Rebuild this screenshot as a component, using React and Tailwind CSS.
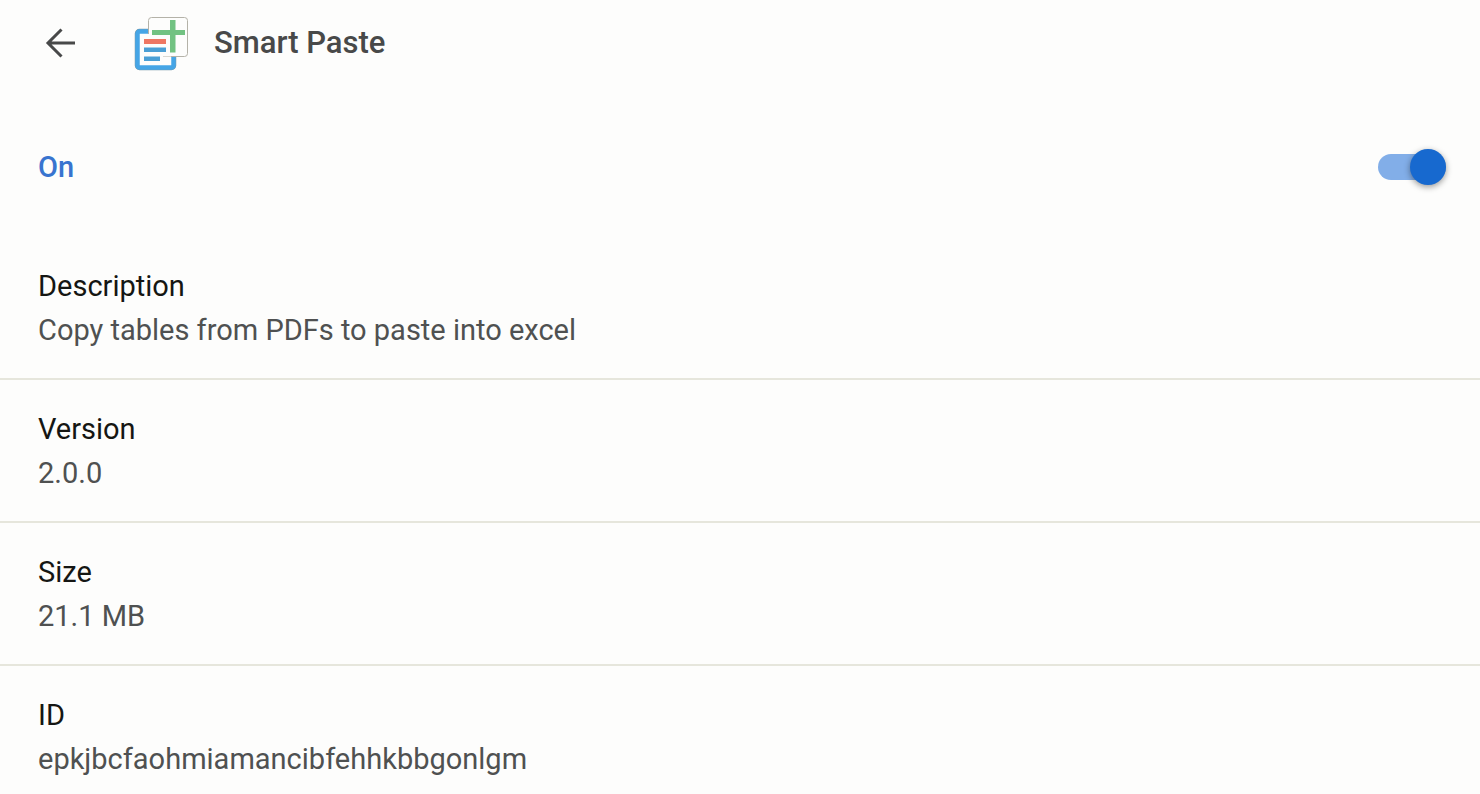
import { useState } from 'react';

const details = [
  { label: 'Description', value: 'Copy tables from PDFs to paste into excel' },
  { label: 'Version', value: '2.0.0' },
  { label: 'Size', value: '21.1 MB' },
  { label: 'ID', value: 'epkjbcfaohmiamancibfehhkbbgonlgm' },
];

function BackArrow() {
  return (
    <svg viewBox="0 0 32 32" className="size-8" fill="none" stroke="currentColor" strokeWidth="3" aria-hidden="true">
      <path d="M31 16H4M17.500 2.500L4 16l13.500 13.500" />
    </svg>
  );
}

function ExtensionIcon() {
  return (
    <svg viewBox="0 0 56 56" className="size-14" aria-hidden="true">
      <rect x="3.500" y="16.500" width="36" height="36" rx="2" fill="#fdfdfc" stroke="#7b9aa8" strokeWidth="5.500" />
      <rect x="3.500" y="16.500" width="36" height="36" rx="2" fill="#fdfdfc" stroke="#45a5e6" strokeWidth="4.500" />
      <rect x="14.500" y="2.500" width="39" height="39" rx="3" fill="#fdfdfc" stroke="#b4b2a8" />
      <path d="M6 19h23v22.500h8V50H6z" fill="#fdfdfc" />
      <path d="M10 24h22v5H10z" fill="#ee7763" />
      <path d="M10 32.500h22V37H10zM10 41.500h16V46H10z" fill="#4a9fd5" />
      <path d="M36 5h5.500v10H51v5h-9.500v17.500H36V20H18v-5h18z" fill="#72c282" />
    </svg>
  );
}

export default function App() {
  const [enabled, setEnabled] = useState(true);

  return (
    <main className="min-h-screen bg-[#fdfdfc] font-[Roboto,sans-serif] text-[29px] leading-11 text-[#4f5151]">
      <header className="flex h-[86px] items-center pl-11">
        <button type="button" aria-label="Back" className="flex size-8 items-center justify-center text-[#484949]">
          <BackArrow />
        </button>
        <div className="ml-[58px] flex items-center gap-6">
          <ExtensionIcon />
          <h1 className="text-[31px] font-medium text-[#484949]">Smart Paste</h1>
        </div>
      </header>

      <label className="mt-3 flex h-[138px] cursor-pointer items-center justify-between pr-[34px] pl-[38px] font-medium text-[#3874cf]">
        {enabled ? 'On' : 'Off'}
        <span className="flex h-9 w-17 items-center">
          <input
            type="checkbox"
            role="switch"
            checked={enabled}
            onChange={(event) => setEnabled(event.target.checked)}
            className="peer sr-only"
          />
          <span className="flex h-[26px] w-17 items-center rounded-full bg-[#bdc1c6] peer-checked:justify-end peer-checked:bg-[#82aee8] peer-checked:*:bg-[#1769cf]">
            <span className="size-9 rounded-full bg-white shadow-[0_2px_6px_rgba(0,0,0,0.4)]" />
          </span>
        </span>
      </label>

      <dl>
        {details.map(({ label, value }) => (
          <div key={label} className="border-b-2 border-[#e6e6dc] px-[38px] pt-7 pb-[26px] not-first:pt-[27px] last:border-b-0 last:pb-0">
            <dt className="text-[#151613]">{label}</dt>
            <dd>{value}</dd>
          </div>
        ))}
      </dl>
    </main>
  );
}
